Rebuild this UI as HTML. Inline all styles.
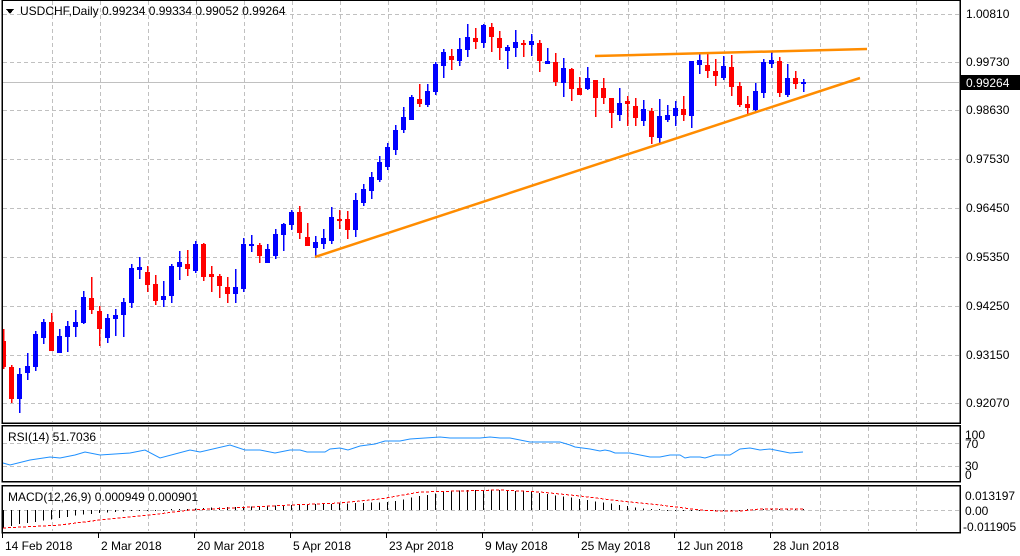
<!DOCTYPE html>
<html><head><meta charset="utf-8"><style>
html,body{margin:0;padding:0;background:#fff;width:1020px;height:556px;overflow:hidden}
svg{display:block}
text{font-family:"Liberation Sans",sans-serif;font-size:12px;fill:#000}
</style></head><body>
<svg id="s" width="1020" height="556" xmlns="http://www.w3.org/2000/svg" shape-rendering="crispEdges">
<g id="grid" stroke="#c0c0c0" stroke-dasharray="4,3" stroke-width="1"></g>
<line x1="2" y1="82.5" x2="959" y2="82.5" stroke="#c0c0c0"/>
<g id="candles"></g>
<g shape-rendering="auto">
<polyline points="315,257 860,78" stroke="#ff8c00" stroke-width="2.5" fill="none"/>
<polyline points="595,56 867,49" stroke="#ff8c00" stroke-width="2.5" fill="none"/>
<polyline id="rsi" stroke="#1e90ff" stroke-width="1" fill="none"/>
</g>
<g id="macd" stroke="#000" stroke-width="1"></g>
<polyline id="sig" stroke="#ff0000" stroke-width="1" stroke-dasharray="3,2" fill="none"/>
<g fill="none" stroke="#000" stroke-width="1.5">
<rect x="2" y="0" width="958" height="423"/>
<rect x="2" y="425.5" width="958" height="56"/>
<rect x="2" y="485.5" width="958" height="47"/>
</g>
<path d="M6 9 L14 9 L10 14 Z" fill="#000"/>
<text x="20" y="15">USDCHF,Daily  0.99234 0.99334 0.99052 0.99264</text>
<text x="8" y="441">RSI(14) 51.7036</text>
<text x="8" y="501">MACD(12,26,9) 0.000949 0.000901</text>
<g id="ylab"></g>
<rect x="960" y="75" width="60" height="15" fill="#000"/>
<text x="966" y="87" style="fill:#fff">0.99264</text>
<text x="965" y="439">100</text><text x="965" y="448">70</text>
<text x="965" y="470">30</text><text x="965" y="479">0</text>
<text x="965" y="500">0.013197</text><text x="965" y="515">0.00</text><text x="963" y="531">-0.011905</text>
<g id="xlab"></g>
</svg>
<script>
var NS="http://www.w3.org/2000/svg";
function el(p,t,a,tx){var e=document.createElementNS(NS,t);for(var k in a)e.setAttribute(k,a[k]);if(tx)e.textContent=tx;document.getElementById(p).appendChild(e);return e;}
var gx=[52,100,148,196,244,292,340,388,436,484,532,580,628,676,724,772,820,868,916];
var hy=[14,62,110,159,208,257,306,355,403];
gx.forEach(function(x){el("grid","line",{x1:x+.5,y1:1,x2:x+.5,y2:422});el("grid","line",{x1:x+.5,y1:427,x2:x+.5,y2:480});el("grid","line",{x1:x+.5,y1:487,x2:x+.5,y2:531});});
hy.forEach(function(y){el("grid","line",{x1:3,y1:y+.5,x2:959,y2:y+.5});});
[443,466].forEach(function(y){el("grid","line",{x1:3,y1:y+.5,x2:959,y2:y+.5});});
el("grid","line",{x1:3,y1:510.5,x2:959,y2:510.5});
var labs=["1.00810","0.99730","0.98630","0.97530","0.96450","0.95350","0.94250","0.93150","0.92070"];
hy.forEach(function(y,i){el("ylab","text",{x:966,y:y+4},labs[i]);});
var xl=[["14 Feb 2018",4],["2 Mar 2018",100],["20 Mar 2018",196],["5 Apr 2018",292],["23 Apr 2018",388],["9 May 2018",484],["25 May 2018",580],["12 Jun 2018",676],["28 Jun 2018",772]];
xl.forEach(function(a){el("xlab","line",{x1:a[1]-1.5,y1:533,x2:a[1]-1.5,y2:538,stroke:"#000"});el("xlab","text",{x:a[1]+1,y:550},a[0]);});
var D=[[341,367,329,369],[367,399,365,403],[399,374,368,413],[373,366,353,380],[367,334,331,371],[338,322,319,344],[322,351,313,351],[353,336,329,353],[337,326,321,352],[327,322,310,337],
[323,297,291,324],[298,310,277,314],[311,329,306,346],[338,318,314,343],[319,315,309,336],[315,302,298,337],[303,268,264,308],[270,267,257,279],[272,285,266,292],[284,301,275,305],
[300,296,281,307],[296,266,264,303],[267,262,251,280],[264,269,250,276],[271,244,241,273],[244,277,243,281],[274,277,266,292],[276,286,274,298],[287,294,277,303],[294,287,269,303],
[289,244,238,292],[245,244,235,252],[245,256,243,263],[263,249,244,263],[256,234,229,259],[235,224,223,251],[225,212,210,230],[212,233,206,239],[237,246,223,246],[248,242,236,258],
[244,238,229,249],[241,217,207,244],[219,221,210,229],[219,230,211,239],[230,200,193,237],[203,189,184,206],[191,177,172,199],[180,162,156,182],[167,147,143,170],[150,130,125,155],
[130,117,107,133],[120,97,95,120],[99,104,84,107],[105,91,84,107],[92,64,62,95],[66,52,49,78],[56,60,49,70],[61,49,38,66],[50,37,24,57],[38,42,28,49],
[43,25,24,48],[27,37,23,52],[38,48,31,60],[51,47,45,69],[48,42,30,57],[43,44,40,57],[45,41,34,56],[43,61,40,72],[64,61,48,64],[62,82,53,86],
[83,68,58,97],[69,89,68,101],[88,95,77,95],[89,78,67,90],[80,98,80,117],[88,98,78,104],[98,113,98,128],[115,103,88,121],[101,104,96,126],[106,118,98,126],
[121,109,100,126],[111,137,108,144],[138,116,99,143],[120,115,105,122],[116,108,101,126],[109,115,96,121],[116,61,61,128],[65,60,54,74],[65,71,53,78],[71,76,59,86],
[78,66,56,80],[67,87,55,96],[86,105,82,107],[104,108,96,114],[110,91,83,112],[93,62,59,98],[64,60,52,68],[61,93,57,97],[95,78,64,97],[78,84,71,89],[83,82,79,92]];
D.forEach(function(d,i){var x=3+8*i;var up=d[1]<d[0];var col=up?"#0000ff":"#ff0000";
var t=Math.min(d[0],d[1]),b=Math.max(d[0],d[1]);if(b-t<2)b=t+2;
el("candles","line",{x1:x+.5,y1:d[2],x2:x+.5,y2:d[3],stroke:col,"stroke-width":1.5});
var x0=Math.max(x-2,3);el("candles","rect",{x:x0,y:t,width:x+3-x0,height:b-t,fill:col});});
document.getElementById("rsi").setAttribute("points","3,463 10,465 30,460 50,457 60,458 75,455 85,452 100,455 130,453 145,450 160,458 190,450 200,452 230,445 245,450 260,450 275,453 290,450 300,450 307,452 325,452 330,449 340,448 348,450 360,446 375,444 385,441 400,441 410,439 425,438 440,437 450,438 460,438 480,438 490,437 500,438 510,438 530,442 545,442 560,442 570,445 575,447 590,449 600,451 605,450 610,451 615,453 625,453 630,453 640,455 650,457 660,457 670,455 680,455 685,458 690,457 700,457 705,458 715,455 730,455 740,449 750,448 760,450 770,449 780,451 790,453 803,452");
function interp(P,x){for(var k=1;k<P.length;k++){if(x<=P[k][0]){var a=P[k-1],b=P[k];return a[1]+(b[1]-a[1])*(x-a[0])/(b[0]-a[0]);}}return P[P.length-1][1];}
var H=[[3,528],[20,524],[35,522],[60,518],[80,515],[100,513],[130,511],[170,510],[200,508],[290,505],[390,502],[420,496],[450,491],[470,490],[500,490],[520,491],[540,493],[560,496],[580,499],[600,502],[620,505],[640,508],[660,510],[700,511],[740,510.5],[760,509],[803,509]];
var S=[[3,528],[60,525],[100,520],[150,515],[190,510],[290,505],[340,503],[380,499],[420,492],[460,491],[500,490],[540,492],[580,496],[620,501],[660,505],[700,510],[720,511],[740,511],[760,509],[803,509]];
var sp=[];
for(var i=0;i<=100;i++){var x=3+8*i+.5;var y=interp(H,x);el("macd","line",{x1:x,y1:510,x2:x,y2:Math.abs(y-510)<1?(y<510?509:511):y.toFixed(1)});}
for(var x=3;x<=803;x+=4)sp.push(x+","+interp(S,x).toFixed(1));
document.getElementById("sig").setAttribute("points",sp.join(" "));
</script>
</body></html>
